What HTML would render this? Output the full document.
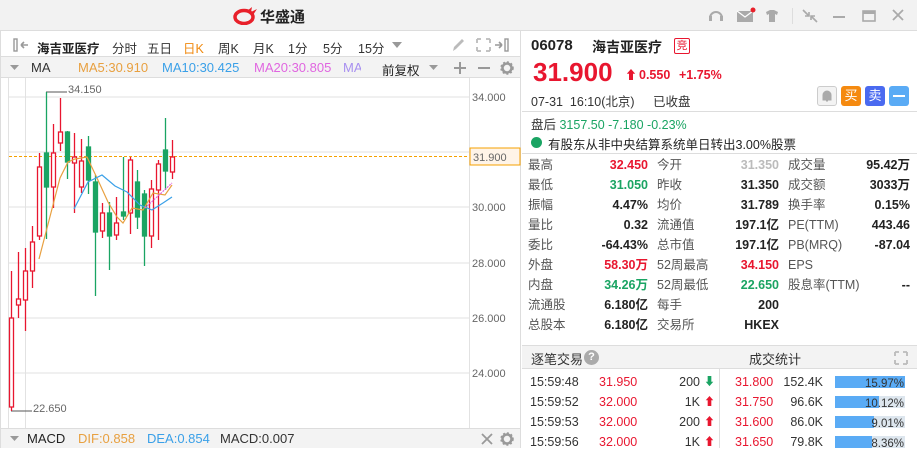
<!DOCTYPE html>
<html><head><meta charset="utf-8"><style>
*{margin:0;padding:0;box-sizing:border-box}
body{width:917px;height:448px;overflow:hidden;background:#fff;font-family:"Liberation Sans","Noto Sans CJK SC",sans-serif;font-size:12px;color:#333;position:relative}
.a{position:absolute;white-space:nowrap}
.r{text-align:right}
.b{font-weight:bold}
.red{color:#e8162f}.grn{color:#1aa463}
.lab{color:#555;font-size:12.5px}
.val{font-weight:bold;color:#222;font-size:12.5px}
.tb{position:absolute;top:38px;font-size:12.5px;color:#333;white-space:nowrap}
</style></head><body>
<div class="a" style="left:0;top:0;width:917px;height:31px;background:#f2f2f2;border-bottom:1px solid #ddd"></div>
<svg class="a" style="left:233px;top:7px" width="28" height="18" viewBox="0 0 28 18"><ellipse cx="11" cy="10" rx="9" ry="6.5" fill="none" stroke="#e8202a" stroke-width="3.5"/><path d="M14 4 L19 0 L18 5 L24 2 L20 8" fill="#e8202a"/></svg>
<div class="a b" style="left:260px;top:6px;font-size:15px;color:#222">华盛通</div>
<svg class="a" style="left:707px;top:7px" width="200" height="18" viewBox="0 0 200 18">
<path d="M3 11 A6 6 0 1 1 15 11" fill="none" stroke="#aaa" stroke-width="2"/><rect x="2" y="9" width="3" height="5" fill="#aaa"/><rect x="13" y="9" width="3" height="5" fill="#aaa"/>
<rect x="30" y="4" width="16" height="11" fill="#aaa"/><path d="M30 4 L38 10 L46 4" stroke="#fff" fill="none" stroke-width="1.2"/><circle cx="46" cy="3" r="2.5" fill="#e8202a"/>
<path d="M59 5 L63 3 L67 3 L71 5 L70 8 L68 7 L68 15 L62 15 L62 7 L60 8Z" fill="#aaa"/>
<rect x="85" y="1" width="1" height="16" fill="#ddd"/>
<path d="M96 3 L102 9 M102 5 L102 9 L98 9 M110 15 L104 9 M104 13 L104 9 L108 9" stroke="#aaa" stroke-width="1.6" fill="none"/>
<rect x="126" y="9" width="12" height="2" fill="#aaa"/>
<rect x="156" y="4" width="12" height="10" fill="none" stroke="#aaa" stroke-width="1.6"/><rect x="156" y="4" width="12" height="3" fill="#aaa"/>
<path d="M186 3 L196 13 M196 3 L186 13" stroke="#aaa" stroke-width="1.8"/>
</svg>
<div class="a" style="left:0;top:31px;width:521px;height:26px;background:#fff;border-bottom:1px solid #ddd"></div>
<div class="a" style="left:0;top:31px;width:521px;height:417px;border-left:1px solid #ddd;border-right:1px solid #ddd"></div>
<svg class="a" style="left:13px;top:38px" width="16" height="14"><rect x="1" y="1" width="3" height="12" fill="none" stroke="#999" stroke-width="1.4"/><path d="M8 7 L15 7 M8 7 L11 4 M8 7 L11 10" stroke="#999" stroke-width="1.6" fill="none"/></svg>
<div class="tb b" style="left:37px;color:#222">海吉亚医疗</div>
<div class="tb" style="left:112px">分时</div>
<div class="tb" style="left:147px">五日</div>
<div class="tb" style="left:183px;color:#f08a10">日K</div>
<div class="tb" style="left:218px">周K</div>
<div class="tb" style="left:253px">月K</div>
<div class="tb" style="left:288px">1分</div>
<div class="tb" style="left:323px">5分</div>
<div class="tb" style="left:358px">15分</div>
<svg class="a" style="left:392px;top:42px" width="10" height="6"><path d="M0 0 L10 0 L5 6Z" fill="#999"/></svg>
<svg class="a" style="left:450px;top:37px" width="66" height="16"><path d="M3 14 L4 10 L12 2 L14 4 L6 12Z" fill="#bbb"/><path d="M27 2 L31 2 M27 2 L27 6 M40 2 L36 2 M40 2 L40 6 M27 14 L31 14 M27 14 L27 10 M40 14 L36 14 M40 14 L40 10" stroke="#bbb" stroke-width="1.8" fill="none"/><path d="M45 8 L52 8 M52 8 L49 5 M52 8 L49 11" stroke="#999" stroke-width="1.6" fill="none"/><rect x="55" y="2" width="3" height="12" fill="none" stroke="#999" stroke-width="1.4"/></svg>
<div class="a" style="left:1px;top:57px;width:519px;height:21px;background:#f3f3f3;border-bottom:1px solid #ddd"></div>
<svg class="a" style="left:10px;top:65px" width="9" height="5"><path d="M0 0 L9 0 L4.5 5Z" fill="#999"/></svg>
<div class="a" style="left:31px;top:60px;font-size:13px;color:#333">MA</div>
<div class="a" style="left:78px;top:60px;font-size:13px;color:#e8a040">MA5:30.910</div>
<div class="a" style="left:162px;top:60px;font-size:13px;color:#3aa0e8">MA10:30.425</div>
<div class="a" style="left:254px;top:60px;font-size:13px;color:#e066e0">MA20:30.805</div>
<div class="a" style="left:343px;top:60px;font-size:13px;color:#a890f0;width:18px;overflow:hidden">MA</div>
<div class="a" style="left:382px;top:60px;font-size:12.5px;color:#222">前复权</div>
<svg class="a" style="left:429px;top:65px" width="9" height="5"><path d="M0 0 L9 0 L4.5 5Z" fill="#999"/></svg>
<svg class="a" style="left:452px;top:61px" width="64" height="14"><path d="M2 7 L14 7 M8 1 L8 13" stroke="#999" stroke-width="2"/><path d="M26 7 L38 7" stroke="#999" stroke-width="2"/><circle cx="55" cy="7" r="4.5" fill="none" stroke="#999" stroke-width="2.5"/><circle cx="55" cy="7" r="6" fill="none" stroke="#999" stroke-width="1.5" stroke-dasharray="2 2"/></svg>
<svg class="a" style="left:0;top:0" width="521" height="448">
<g stroke="#e2e2e2" stroke-width="1">
<line x1="9" y1="97" x2="469" y2="97"/><line x1="9" y1="152" x2="469" y2="152"/><line x1="9" y1="207" x2="469" y2="207"/><line x1="9" y1="263" x2="469" y2="263"/><line x1="9" y1="318" x2="469" y2="318"/><line x1="9" y1="373" x2="469" y2="373"/>
<line x1="25.5" y1="78" x2="25.5" y2="428"/><line x1="469.5" y1="78" x2="469.5" y2="428"/><line x1="8.5" y1="78" x2="8.5" y2="428"/>
</g>
<line x1="9" y1="156.5" x2="469" y2="156.5" stroke="#f5a000" stroke-dasharray="3 2"/>
<rect x="470" y="148" width="50" height="17" fill="#fff4e8" stroke="#f5a000"/>
<g font-size="11" fill="#666" font-family="Liberation Sans,sans-serif">
<text x="472" y="101">34.000</text><text x="473" y="161">31.900</text><text x="472" y="211">30.000</text><text x="472" y="267">28.000</text><text x="472" y="322">26.000</text><text x="472" y="377">24.000</text>
<text x="68" y="93">34.150</text><text x="33" y="412">22.650</text>
</g>
<path d="M46 92 V92 H67" stroke="#555" fill="none"/><path d="M11 411 H32" stroke="#555" fill="none"/>
<g stroke-width="1.3">
<g stroke="#e8162f" fill="#fff">
<line x1="11.5" y1="271" x2="11.5" y2="411"/><rect x="9.5" y="318" width="4" height="89"/>
<line x1="18.5" y1="252" x2="18.5" y2="318"/><rect x="16.5" y="299" width="4" height="6"/>
<line x1="25.5" y1="248" x2="25.5" y2="331"/><rect x="23.5" y="271" width="4" height="29"/>
<line x1="32.5" y1="226" x2="32.5" y2="288"/><rect x="30.5" y="242" width="4" height="29"/>
<line x1="39.5" y1="153" x2="39.5" y2="240"/><rect x="37.5" y="167" width="4" height="69"/>
<line x1="53.5" y1="124" x2="53.5" y2="208"/><rect x="51.5" y="153" width="4" height="34"/>
<line x1="60.5" y1="98" x2="60.5" y2="151"/><rect x="58.5" y="132" width="4" height="11"/>
<line x1="74.5" y1="133" x2="74.5" y2="213"/><rect x="72.5" y="157" width="4" height="6"/>
<line x1="81.5" y1="139" x2="81.5" y2="193"/><rect x="79.5" y="161" width="4" height="26"/>
<line x1="102.5" y1="203" x2="102.5" y2="238"/><rect x="100.5" y="213" width="4" height="18"/>
<line x1="116.5" y1="197" x2="116.5" y2="240"/><rect x="114.5" y="223" width="4" height="12"/>
<line x1="130.5" y1="157" x2="130.5" y2="234"/><rect x="128.5" y="160" width="4" height="53"/>
<line x1="151.5" y1="180" x2="151.5" y2="248"/><rect x="149.5" y="189" width="4" height="47"/>
<line x1="158.5" y1="160" x2="158.5" y2="240"/><rect x="156.5" y="164" width="4" height="26"/>
<line x1="172.5" y1="140" x2="172.5" y2="179"/><rect x="170.5" y="157" width="4" height="15"/>
</g>
<g stroke="#1aa463" fill="#1aa463">
<line x1="46.5" y1="92" x2="46.5" y2="239"/><rect x="44.5" y="153" width="4" height="34"/>
<line x1="67.5" y1="131" x2="67.5" y2="179"/><rect x="65.5" y="132" width="4" height="30"/>
<line x1="88.5" y1="136" x2="88.5" y2="194"/><rect x="86.5" y="147" width="4" height="33"/>
<line x1="95.5" y1="175" x2="95.5" y2="296"/><rect x="93.5" y="182" width="4" height="50"/>
<line x1="109.5" y1="202" x2="109.5" y2="270"/><rect x="107.5" y="213" width="4" height="23"/>
<line x1="123.5" y1="157" x2="123.5" y2="220"/><rect x="121.5" y="212" width="4" height="4"/>
<line x1="137.5" y1="170" x2="137.5" y2="229"/><rect x="135.5" y="182" width="4" height="35"/>
<line x1="144.5" y1="190" x2="144.5" y2="266"/><rect x="142.5" y="194" width="4" height="42"/>
<line x1="165.5" y1="118" x2="165.5" y2="190"/><rect x="163.5" y="150" width="4" height="21"/>
</g>
</g>
<polyline points="39,259 53,205 60,178 68,162 75,159 87,157 97,178 108,202 117,217 123,223 132,208 143,210 153,193 165,195 172,185" fill="none" stroke="#e8a040" stroke-width="1.2"/>
<polyline points="74,209 88,182 102,175 115,186 127,192 140,205 152,210 163,203 172,197" fill="none" stroke="#3aa0e8" stroke-width="1.2"/>
<polyline points="145,208 158,196 172,183" fill="none" stroke="#e066e0" stroke-width="1.2" stroke-dasharray="2 1"/>
</svg>
<div class="a" style="left:1px;top:428px;width:519px;height:20px;background:#f3f3f3;border-top:1px solid #ddd"></div>
<svg class="a" style="left:10px;top:436px" width="9" height="5"><path d="M0 0 L9 0 L4.5 5Z" fill="#999"/></svg>
<div class="a" style="left:27px;top:431px;font-size:13px;color:#222">MACD</div>
<div class="a" style="left:78px;top:431px;font-size:13px;color:#e8a040">DIF:0.858</div>
<div class="a" style="left:147px;top:431px;font-size:13px;color:#3aa0e8">DEA:0.854</div>
<div class="a" style="left:220px;top:431px;font-size:13px;color:#333">MACD:0.007</div>
<svg class="a" style="left:480px;top:432px" width="40" height="14"><path d="M2 2 L12 12 M12 2 L2 12" stroke="#999" stroke-width="1.8"/><circle cx="27" cy="7" r="4.5" fill="none" stroke="#999" stroke-width="2.5"/><circle cx="27" cy="7" r="6" fill="none" stroke="#999" stroke-width="1.5" stroke-dasharray="2 2"/></svg>
<div class="a b" style="left:531px;top:37px;font-size:15px;color:#222">06078</div>
<div class="a b" style="left:592px;top:37px;font-size:14px;color:#222">海吉亚医疗</div>
<div class="a" style="left:674px;top:38px;width:16px;height:16px;border:1px solid #e8162f;border-radius:2px;color:#e8162f;font-size:11px;text-align:center;line-height:14px">竞</div>
<div class="a b red" style="left:533px;top:57px;font-size:26px">31.900</div>
<div class="a b red" style="left:625px;top:66px;font-size:12px">⬆</div>
<div class="a b red" style="left:639px;top:68px;font-size:12.5px">0.550</div>
<div class="a b red" style="left:679px;top:68px;font-size:12.5px">+1.75%</div>
<div class="a" style="left:531px;top:91px;font-size:12.5px;color:#333">07-31&nbsp; 16:10(北京)</div>
<div class="a" style="left:653px;top:91px;font-size:12.5px;color:#333">已收盘</div>
<div class="a" style="left:817px;top:86px;width:20px;height:20px;border:1px solid #ccc;border-radius:3px;background:#f3f3f3"><svg width="18" height="18"><path d="M5 13 L5 8 A4 4 0 0 1 13 8 L13 13 Z M8 14 L10 14" fill="#aaa" stroke="#aaa"/></svg></div>
<div class="a" style="left:841px;top:86px;width:20px;height:20px;border-radius:3px;background:#f58a10;color:#fff;font-size:13px;text-align:center;line-height:20px">买</div>
<div class="a" style="left:865px;top:86px;width:20px;height:20px;border-radius:3px;background:#4a6af0;color:#fff;font-size:13px;text-align:center;line-height:20px">卖</div>
<div class="a" style="left:889px;top:86px;width:20px;height:20px;border-radius:3px;background:#5aabf5"><div style="margin:9px 4px;height:2px;background:#fff"></div></div>
<div class="a" style="left:522px;top:111px;width:395px;height:1px;background:#ddd"></div>
<div class="a" style="left:531px;top:114px;font-size:12.5px;color:#333">盘后 <span style="color:#1aa463">3157.50 -7.180 -0.23%</span></div>
<div class="a" style="left:531px;top:137px;width:11px;height:11px;border-radius:50%;background:#1aa463"></div>
<div class="a" style="left:548px;top:134px;font-size:12.5px;color:#222">有股东从非中央结算系统单日转出3.00%股票</div>
<div class="a" style="left:522px;top:153px;width:395px;height:1px;background:#ddd"></div>
<div class="a" style="left:528px;top:155px;width:385px;line-height:20px">
<div class="a lab" style="left:0">最高<br>最低<br>振幅<br>量比<br>委比<br>外盘<br>内盘<br>流通股<br>总股本</div>
<div class="a r" style="right:265px;width:100px;font-weight:bold;font-size:12.5px;color:#222"><span class="red">32.450</span><br><span class="grn">31.050</span><br>4.47%<br>0.32<br>-64.43%<br><span class="red">58.30万</span><br><span class="grn">34.26万</span><br>6.180亿<br>6.180亿</div>
<div class="a lab" style="left:129px">今开<br>昨收<br>均价<br>流通值<br>总市值<br>52周最高<br>52周最低<br>每手<br>交易所</div>
<div class="a r" style="right:134px;width:100px;font-weight:bold;font-size:12.5px;color:#222"><span style="color:#bbb">31.350</span><br>31.350<br>31.789<br>197.1亿<br>197.1亿<br><span class="red">34.150</span><br><span class="grn">22.650</span><br>200<br>HKEX</div>
<div class="a lab" style="left:260px">成交量<br>成交额<br>换手率<br>PE(TTM)<br>PB(MRQ)<br>EPS<br>股息率(TTM)</div>
<div class="a r" style="right:3px;width:100px;font-weight:bold;font-size:12.5px;color:#222">95.42万<br>3033万<br>0.15%<br>443.46<br>-87.04<br><br>--</div>
</div>
<div class="a" style="left:522px;top:345px;width:395px;height:24px;background:#f3f3f3;border-top:1px solid #ddd;border-bottom:1px solid #ddd"></div>
<div class="a" style="left:531px;top:349px;font-size:13px;color:#333">逐笔交易</div>
<div class="a" style="left:584px;top:350px;width:15px;height:15px;border-radius:50%;background:#aaa;color:#fff;font-size:11px;font-weight:bold;text-align:center;line-height:15px">?</div>
<div class="a" style="left:749px;top:349px;font-size:13px;color:#333">成交统计</div>
<svg class="a" style="left:894px;top:351px" width="14" height="14"><path d="M1 1 L5 1 M1 1 L1 5 M13 1 L9 1 M13 1 L13 5 M1 13 L5 13 M1 13 L1 9 M13 13 L9 13 M13 13 L13 9" stroke="#bbb" stroke-width="1.8" fill="none"/></svg>
<div class="a" style="left:719px;top:369px;width:1px;height:79px;background:#ddd"></div>
<div class="a" style="left:530px;top:372px;line-height:20px;font-size:12.5px;color:#333">15:59:48<br>15:59:52<br>15:59:53<br>15:59:56</div>
<div class="a red" style="left:599px;top:372px;line-height:20px;font-size:12.5px">31.950<br>32.000<br>32.000<br>32.000</div>
<div class="a r" style="left:650px;width:50px;top:372px;line-height:20px;font-size:12.5px;color:#333">200<br>1K<br>200<br>1K</div>
<div class="a" style="left:704px;top:372px;line-height:20px;font-size:11px"><span class="grn">⬇</span><br><span class="red">⬆</span><br><span class="red">⬆</span><br><span class="red">⬆</span></div>
<div class="a red" style="left:735px;top:372px;line-height:20px;font-size:12.5px">31.800<br>31.750<br>31.600<br>31.650</div>
<div class="a r" style="left:770px;width:53px;top:372px;line-height:20px;font-size:12.5px;color:#333">152.4K<br>96.6K<br>86.0K<br>79.8K</div>
<div class="a" style="left:835px;top:376px;width:70px;height:12px;background:#dde6ee"><div style="width:70px;height:12px;background:#5aabf5"></div></div>
<div class="a" style="left:835px;top:396px;width:70px;height:12px;background:#dde6ee"><div style="width:44px;height:12px;background:#5aabf5"></div></div>
<div class="a" style="left:835px;top:416px;width:70px;height:12px;background:#dde6ee"><div style="width:39px;height:12px;background:#5aabf5"></div></div>
<div class="a" style="left:835px;top:436px;width:70px;height:12px;background:#dde6ee"><div style="width:37px;height:12px;background:#5aabf5"></div></div>
<div class="a r" style="left:835px;width:69px;top:374px;line-height:20px;font-size:11.5px;color:#333">15.97%<br>10.12%<br>9.01%<br>8.36%</div>
</body></html>
